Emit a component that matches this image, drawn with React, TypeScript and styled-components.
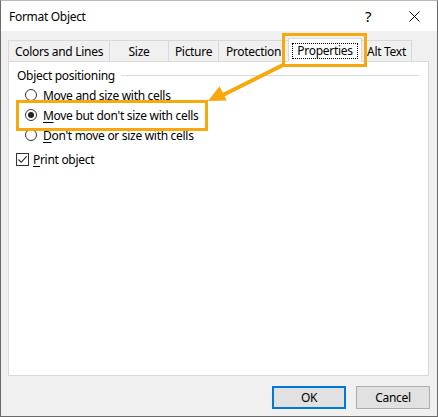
import React from "react";
import styled, { createGlobalStyle } from "styled-components";

const Global = createGlobalStyle`
  html, body {
    margin: 0;
    padding: 0;
    background: #ffffff;
  }
  body {
    font-family: "Noto Sans", "Open Sans", sans-serif;
    font-size: 12px;
    letter-spacing: -0.3px;
    color: #000000;
  }
`;

const ORANGE = "#f6a80c";

const Window = styled.div`
  position: relative;
  width: 438px;
  height: 417px;
  box-sizing: border-box;
  border: 1px solid #6a6a6a;
  border-top-color: #b9b9b9;
  display: flex;
  flex-direction: column;
  background: #f0f0f0;
`;

const TitleBar = styled.div`
  height: 30px;
  display: flex;
  align-items: center;
  justify-content: space-between;
  background: #ffffff;
  padding-left: 8px;
`;

const Title = styled.div`
  font-size: 12px;
`;

const TitleButtons = styled.div`
  display: flex;
  height: 100%;
`;

const TitleButton = styled.div`
  width: 46px;
  height: 100%;
  display: flex;
  align-items: center;
  justify-content: center;
  font-size: 15px;
`;

const Body = styled.div`
  flex: 1;
  display: flex;
  flex-direction: column;
  padding: 7px;
`;

const TabStrip = styled.div`
  height: 23px;
  display: flex;
  align-items: flex-end;
`;

const Tab = styled.div<{ $w: number; $selected?: boolean }>`
  position: relative;
  box-sizing: border-box;
  width: ${(p) => p.$w}px;
  height: ${(p) => (p.$selected ? 24 : 21)}px;
  margin-left: -1px;
  margin-bottom: ${(p) => (p.$selected ? -1 : 0)}px;
  border: 1px solid #d9d9d9;
  border-bottom: none;
  background: ${(p) => (p.$selected ? "#ffffff" : "#f0f0f0")};
  z-index: ${(p) => (p.$selected ? 2 : 1)};
  display: flex;
  align-items: ${(p) => (p.$selected ? "flex-start" : "center")};
  padding-top: ${(p) => (p.$selected ? 4 : 0)}px;
  justify-content: center;
  white-space: nowrap;
  &:first-child {
    margin-left: 0;
  }
`;

const FocusRing = styled.span`
  border: 1px dotted #000000;
  padding: 0 4px;
  line-height: 14px;
`;

const Panel = styled.div`
  position: relative;
  z-index: 1;
  height: 315px;
  box-sizing: border-box;
  margin-right: 1px;
  background: #ffffff;
  border: 1px solid #d9d9d9;
  padding: 5px 8px 0 8px;
  display: flex;
  flex-direction: column;
`;

const GroupHeader = styled.div`
  display: flex;
  align-items: center;
  gap: 6px;
  height: 17px;
`;

const GroupLabel = styled.span`
  white-space: nowrap;
`;

const GroupRule = styled.div`
  flex: 1;
  height: 1px;
  background: #dcdcdc;
  margin-right: 1px;
`;

const OptionList = styled.div`
  display: flex;
  flex-direction: column;
  padding-left: 8px;
  margin-top: 1px;
`;

const OptionRow = styled.label`
  display: flex;
  align-items: center;
  gap: 6px;
  height: 20px;
  white-space: nowrap;
`;

const Radio = styled.span<{ $checked?: boolean }>`
  width: 12px;
  height: 12px;
  box-sizing: border-box;
  border: 1px solid #333333;
  border-radius: 50%;
  background: #ffffff;
  display: flex;
  align-items: center;
  justify-content: center;
  &::after {
    content: "";
    display: ${(p) => (p.$checked ? "block" : "none")};
    width: 6px;
    height: 6px;
    border-radius: 50%;
    background: #222222;
  }
`;

const CheckRow = styled.label`
  display: flex;
  align-items: center;
  gap: 4px;
  height: 20px;
  margin-top: 4px;
  margin-left: -1px;
  white-space: nowrap;
`;

const CheckBox = styled.span`
  width: 13px;
  height: 13px;
  box-sizing: border-box;
  border: 1px solid #333333;
  background: #ffffff;
  display: flex;
  align-items: center;
  justify-content: center;
`;

const Key = styled.span`
  text-decoration: underline;
  text-underline-offset: 2px;
`;

const ButtonRow = styled.div`
  display: flex;
  justify-content: flex-end;
  gap: 10px;
  margin-top: 10px;
`;

const Button = styled.div<{ $primary?: boolean }>`
  width: 74px;
  height: 23px;
  box-sizing: border-box;
  display: flex;
  align-items: center;
  justify-content: center;
  background: #e1e1e1;
  border: ${(p) => (p.$primary ? "2px solid #0078d7" : "1px solid #adadad")};
`;

const Highlight = styled.div<{ $x: number; $y: number; $w: number; $h: number }>`
  position: absolute;
  left: ${(p) => p.$x}px;
  top: ${(p) => p.$y}px;
  width: ${(p) => p.$w}px;
  height: ${(p) => p.$h}px;
  box-sizing: border-box;
  border: 3px solid ${ORANGE};
  z-index: 5;
  pointer-events: none;
`;

const ArrowLayer = styled.svg`
  position: absolute;
  left: -1px;
  top: -1px;
  z-index: 6;
  pointer-events: none;
`;

const tabs = [
  { label: "Colors and Lines", w: 102 },
  { label: "Size", w: 60 },
  { label: "Picture", w: 51 },
  { label: "Protection", w: 71 },
  { label: "Properties", w: 74, selected: true },
  { label: "Alt Text", w: 51 },
];

export default function App() {
  return (
    <>
      <Global />
      <Window>
        <TitleBar>
          <Title>Format Object</Title>
          <TitleButtons>
            <TitleButton>?</TitleButton>
            <TitleButton>
              <svg width="11" height="11" viewBox="0 0 11 11">
                <path d="M0.5 0.5 L10.5 10.5 M10.5 0.5 L0.5 10.5" stroke="#000" strokeWidth="1" />
              </svg>
            </TitleButton>
          </TitleButtons>
        </TitleBar>
        <Body>
          <TabStrip>
            {tabs.map((t) => (
              <Tab key={t.label} $w={t.w} $selected={t.selected}>
                {t.selected ? <FocusRing>{t.label}</FocusRing> : t.label}
              </Tab>
            ))}
          </TabStrip>
          <Panel>
            <GroupHeader>
              <GroupLabel>Object positioning</GroupLabel>
              <GroupRule />
            </GroupHeader>
            <OptionList>
              <OptionRow>
                <Radio />
                <span>Move and size with cells</span>
              </OptionRow>
              <OptionRow>
                <Radio $checked />
                <span>
                  <Key>M</Key>ove but don't size with cells
                </span>
              </OptionRow>
              <OptionRow>
                <Radio />
                <span>
                  <Key>D</Key>on't move or size with cells
                </span>
              </OptionRow>
            </OptionList>
            <CheckRow>
              <CheckBox>
                <svg width="11" height="11" viewBox="0 0 11 11">
                  <path d="M1.5 5.5 L4.2 8.3 L9.6 2.4" fill="none" stroke="#222" strokeWidth="1.1" />
                </svg>
              </CheckBox>
              <span>
                <Key>P</Key>rint object
              </span>
            </CheckRow>
          </Panel>
          <ButtonRow>
            <Button $primary>OK</Button>
            <Button>Cancel</Button>
          </ButtonRow>
        </Body>
        <Highlight $x={281} $y={32} $w={85} $h={34} />
        <Highlight $x={15} $y={99} $w={192} $h={31} />
        <ArrowLayer width="438" height="417" viewBox="0 0 438 417">
          <line x1="285" y1="64" x2="221" y2="96" stroke={ORANGE} strokeWidth="4" />
          <polygon points="208,101 219.6,86.2 226.8,100.4" fill={ORANGE} />
        </ArrowLayer>
      </Window>
    </>
  );
}
